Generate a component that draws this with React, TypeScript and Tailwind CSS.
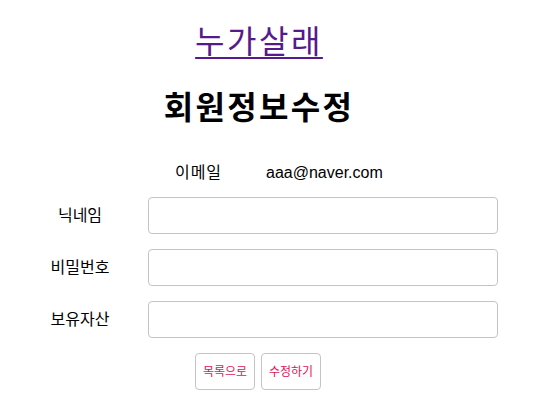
import React from "react";

const font = { fontFamily: '"Liberation Sans", "Noto Sans CJK KR", sans-serif' };

function Row({ label }: { label: string }) {
  return (
    <div className="flex items-center h-[37px]">
      <div className="w-[148px] pl-[34px] text-[16px] text-black">
        <span className="inline-block w-[92px] text-center">{label}</span>
      </div>
      <input
        className="w-[350px] h-[37px] rounded-[4px] border border-[#c4c4c4] bg-white outline-none"
        type="text"
      />
    </div>
  );
}

export default function App() {
  return (
    <div className="w-[534px] h-[406px] bg-white" style={font}>
      <div className="w-[516px] flex flex-col items-center">
        <a
          href="#"
          className="mt-[22px] pl-[2px] text-[32px] leading-[40px] tracking-[2.5px] text-[#551a8b] underline decoration-[2px] underline-offset-[4px]"
        >
          누가살래
        </a>
        <h1 className="mt-[26px] pl-[2px] text-[32px] leading-[40px] tracking-[2.3px] font-bold text-black">회원정보수정</h1>
      </div>
      <div className="mt-[33px] flex items-center h-[24px] text-[16px] text-black">
        <span className="ml-[170px] w-[57px] shrink-0 whitespace-nowrap text-center tracking-[1px]">이메일</span>
        <span className="ml-[39px] whitespace-nowrap">aaa@naver.com</span>
      </div>
      <div className="mt-[12px] flex flex-col gap-[15px]">
        <Row label="닉네임" />
        <Row label="비밀번호" />
        <Row label="보유자산" />
      </div>
      <div className="mt-[15px] flex gap-[6px] pl-[195px]">
        <button className="w-[60px] h-[37px] rounded-[4px] border border-[#c4c4c4] bg-white text-[12px] text-[#e0145a]">
          목록으로
        </button>
        <button className="w-[60px] h-[37px] rounded-[4px] border border-[#c4c4c4] bg-white text-[12px] text-[#e0145a]">
          수정하기
        </button>
      </div>
    </div>
  );
}
